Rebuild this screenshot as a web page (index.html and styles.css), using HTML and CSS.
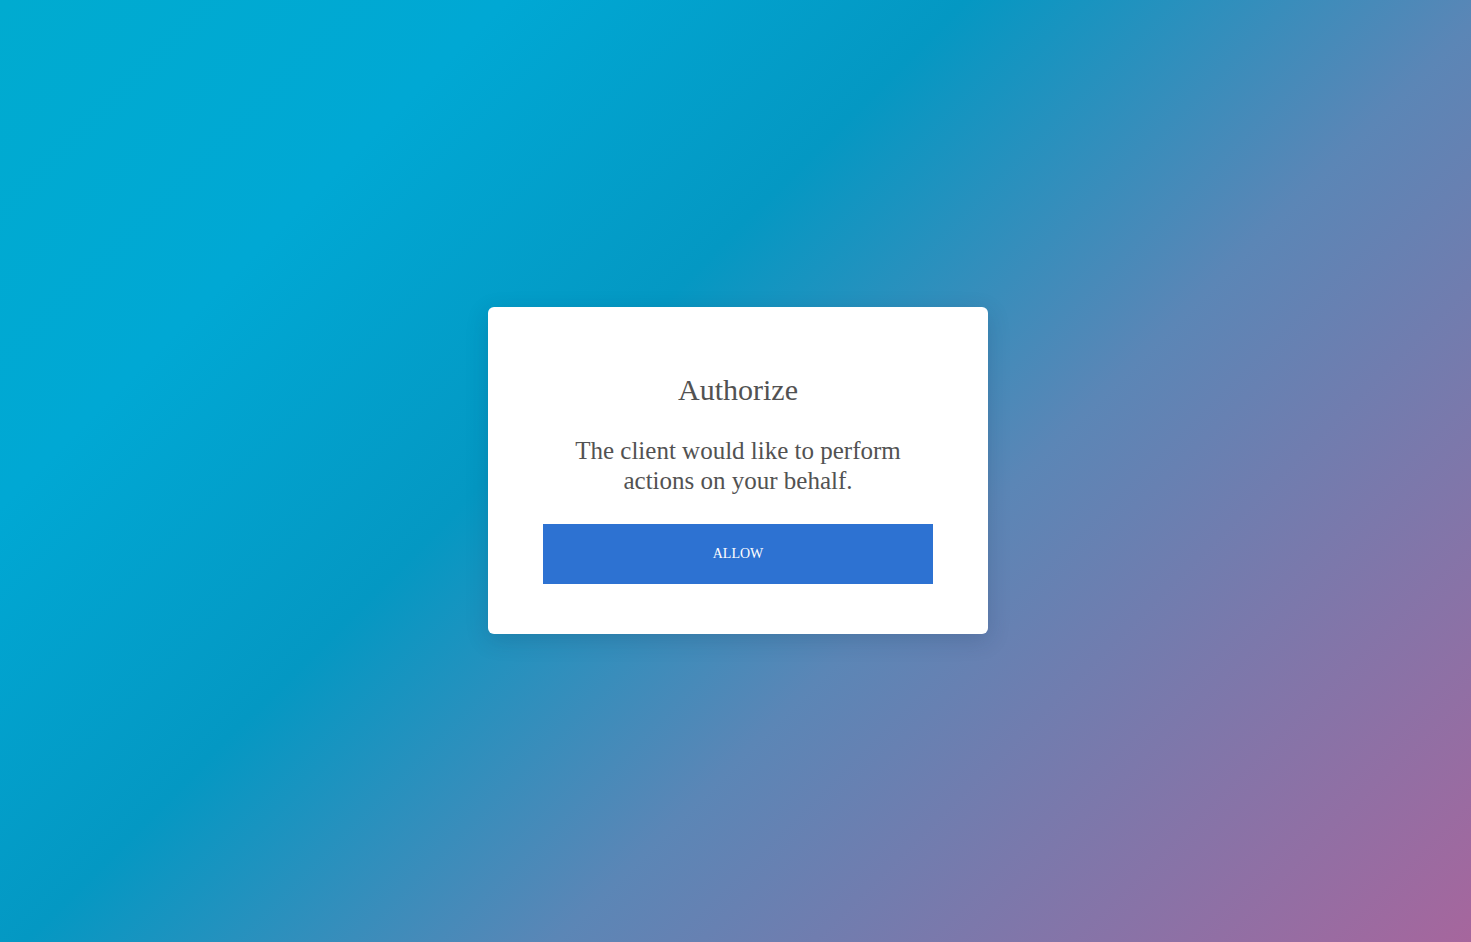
FILE: index.html
```html
<!DOCTYPE html>
<html lang="en">
<head>
<meta charset="utf-8">
<title>Authorize</title>
<link rel="stylesheet" href="styles.css">
</head>
<body>
<main class="page">
  <section class="card">
    <h1 class="card-title">Authorize</h1>
    <p class="card-text">The client would like to perform actions on your behalf.</p>
    <button class="allow-btn" type="button">ALLOW</button>
  </section>
</main>
</body>
</html>
```

FILE: styles.css
```css
* { box-sizing: border-box; }

html, body {
  margin: 0;
  height: 100%;
}

body {
  font-family: "Liberation Serif", "Times New Roman", serif;
  background: linear-gradient(135deg, #00abd0 0%, #00a8d4 21%, #0498c3 40%, #5b86b6 62%, #a6669d 100%);
  color: #525252;
}

.page {
  min-height: 100%;
  display: flex;
  align-items: center;
  justify-content: center;
  padding-left: 5px;
  padding-bottom: 1px;
}

.card {
  width: 500px;
  background: #fff;
  border-radius: 6px;
  box-shadow: 0 6px 22px rgba(20, 40, 80, 0.18);
  padding: 66px 55px 50px;
  display: flex;
  flex-direction: column;
  align-items: stretch;
  text-align: center;
}

.card-title {
  margin: 0 0 29px;
  font-size: 30px;
  font-weight: normal;
  line-height: 34px;
}

.card-text {
  margin: 0 0 28px;
  font-size: 25px;
  line-height: 30px;
}

.allow-btn {
  height: 60px;
  border: 0;
  border-radius: 0;
  background: #2d72d2;
  color: #fff;
  font-family: "Liberation Serif", "Times New Roman", serif;
  font-size: 14px;
  cursor: pointer;
}
```
